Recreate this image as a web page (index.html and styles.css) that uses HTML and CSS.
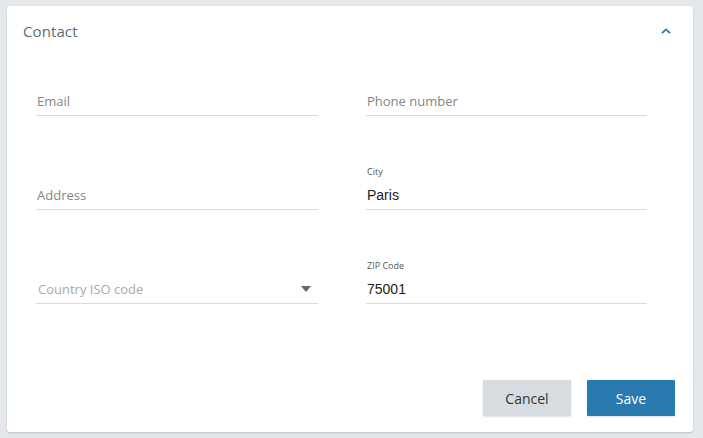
FILE: index.html
```html
<!DOCTYPE html>
<html>
<head>
<meta charset="utf-8">
<link rel="stylesheet" href="styles.css">
</head>
<body>
<div class="card">
  <div class="card-header">
    <span class="title">Contact</span>
    <svg class="chevron" width="10" height="6" viewBox="0 0 10 6"><path d="M1 5.2 L5 1.4 L9 5.2" fill="none" stroke="#2a7ab0" stroke-width="1.8"/></svg>
  </div>
  <div class="fields">
    <div class="field"><div class="label"></div><div class="value placeholder">Email</div></div>
    <div class="field"><div class="label"></div><div class="value placeholder">Phone number</div></div>
    <div class="field"><div class="label"></div><div class="value placeholder">Address</div></div>
    <div class="field"><div class="label">City</div><div class="value filled">Paris</div></div>
    <div class="field"><div class="label"></div><div class="value placeholder light select">Country ISO code<svg class="caret" width="10" height="6" viewBox="0 0 10 6"><path d="M0 0 H10 L5 6 Z" fill="#666"/></svg></div></div>
    <div class="field"><div class="label">ZIP Code</div><div class="value filled">75001</div></div>
  </div>
  <div class="actions">
    <button class="btn btn-cancel">Cancel</button>
    <button class="btn btn-save">Save</button>
  </div>
</div>
</body>
</html>
```
FILE: styles.css
```css
html, body {
  margin: 0;
  padding: 0;
  background: #e5e8eb;
}
body {
  padding: 6px 10px 6px 7px;
  font-family: "Open Sans", "Noto Sans", sans-serif;
}
.card {
  width: 686px;
  height: 426px;
  box-sizing: border-box;
  background: #fff;
  border-radius: 3px;
  box-shadow: 0 1px 2px rgba(0,0,0,0.18);
  display: flex;
  flex-direction: column;
}
.card-header {
  height: 50px;
  display: flex;
  align-items: center;
  justify-content: space-between;
  padding: 0 22px 0 16px;
}
.title {
  font-size: 15px;
  color: #5b6b78;
  letter-spacing: 0.1px;
}
.chevron {
  display: block;
}
.fields {
  display: grid;
  grid-template-columns: 282px 281px;
  column-gap: 48px;
  row-gap: 50px;
  padding: 16px 0 0 29px;
}
.field {
  height: 44px;
  box-sizing: border-box;
  border-bottom: 1px solid #dcdcdc;
  padding-bottom: 3px;
  display: flex;
  flex-direction: column;
}
.label {
  height: 12px;
  line-height: 12px;
  font-size: 9px;
  color: #555;
  margin-bottom: 7px;
  padding-left: 1px;
}
.value {
  height: 20px;
  line-height: 20px;
  font-size: 13px;
  display: flex;
  align-items: center;
  justify-content: space-between;
  padding-left: 1px;
}
.placeholder {
  color: #858585;
}
.light {
  color: #aaaaaa;
  padding-left: 2px;
}
.filled {
  font-family: "Liberation Sans", Arial, sans-serif;
  font-size: 14px;
  color: #222;
  padding-left: 1px;
}
.caret {
  margin-right: 7px;
  display: block;
}
.actions {
  margin-top: auto;
  display: flex;
  justify-content: flex-end;
  gap: 16px;
  padding: 0 18px 16px 0;
}
.btn {
  width: 88px;
  height: 36px;
  border: none;
  border-radius: 1px;
  font-family: "Open Sans", "Noto Sans", sans-serif;
  font-size: 14px;
  box-shadow: 0 1px 2px rgba(0,0,0,0.12);
}
.btn-cancel {
  background: #d7dce0;
  color: #333;
}
.btn-save {
  background: #2a7ab0;
  color: #fff;
}
```
